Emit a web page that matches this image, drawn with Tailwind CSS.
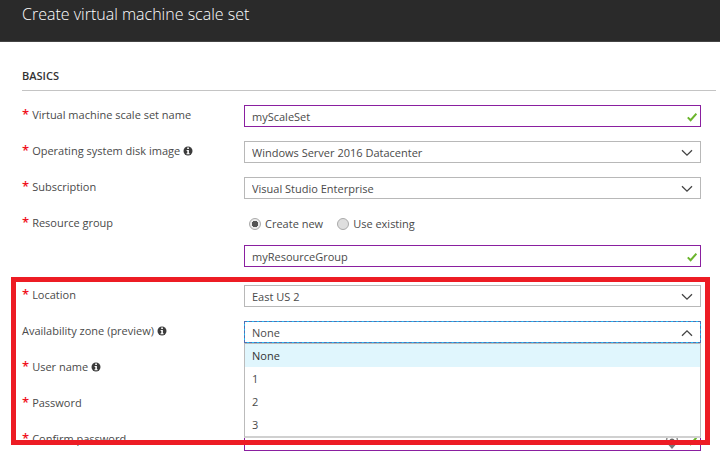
<!DOCTYPE html>
<html lang="en">
<head>
<meta charset="utf-8">
<meta name="viewport" content="width=device-width, initial-scale=1">
<title>Create virtual machine scale set</title>
<script src="https://cdn.jsdelivr.net/npm/@tailwindcss/browser@4"></script>
</head>
<body class="bg-white font-['Open_Sans','Noto_Sans',sans-serif] text-[11px] text-[#4a4a4a]">
<svg class="hidden" aria-hidden="true">
  <symbol id="check" viewBox="0 0 10 10"><path d="M0.8 5.4 3.6 8.2 9.400 1.6" fill="none" stroke="#6bb52c" stroke-width="2"/></symbol>
  <symbol id="chevron" viewBox="0 0 12 8"><path d="M1 1.2 6 6.2 11 1.2" fill="none" stroke="#444" stroke-width="1.3"/></symbol>
  <symbol id="info" viewBox="0 0 10 10"><circle cx="5" cy="5" r="4.500" fill="#3b3b3b"/><path d="M4.2 1.6h1.7v1.5H4.2zM3.6 4h2.3v3.2h.7v1H3.5v-1h.8V5h-.7z" fill="#fff"/></symbol>
  <symbol id="reveal" viewBox="0 0 14 12"><path d="M2.2 0.500Q.6 4 3 7M11.800 0.500Q13.400 4 11 7" fill="none" stroke="#888" stroke-width="1.4"/><circle cx="7" cy="4" r="2.6" fill="#666"/><path d="M3.500 8h7L7 12z" fill="#777"/></symbol>
</svg>

<header class="flex h-[42px] items-start border-b border-[#444] bg-[#2a2a2a] px-[22px] pt-0.5">
  <h1 class="text-base leading-6 font-light text-white">Create virtual machine scale set</h1>
</header>

<main>
  <form>
    <h2 class="mr-1 ml-[22px] border-b border-[#c4c4c4] pt-[26px] pb-1.5 text-[11px] leading-4 font-semibold text-[#333]">BASICS</h2>

    <div class="flex flex-col gap-3.5 pt-3.5 pr-[19px] pl-[22px]">
      <div class="flex">
        <label for="name" class="w-[222px] shrink-0 leading-5"><span class="mr-[3px] text-[13px] leading-4 font-semibold text-[#f0101c]">*</span>Virtual machine scale set name</label>
        <div class="relative h-[22px] flex-1">
          <input id="name" type="text" value="myScaleSet" class="block size-full border border-[#8a1fa0] px-[7px]">
          <svg class="absolute top-[7px] right-1 size-2.5"><use href="#check"/></svg>
        </div>
      </div>
      <div class="flex">
        <label for="image" class="w-[222px] shrink-0 leading-5"><span class="mr-[3px] text-[13px] leading-4 font-semibold text-[#f0101c]">*</span>Operating system disk image <svg class="inline size-2.5 align-[-1px]"><use href="#info"/></svg></label>
        <div class="relative h-[22px] flex-1">
          <select id="image" class="block size-full appearance-none border border-[#b8b8b8] px-[7px] pt-0.5"><option>Windows Server 2016 Datacenter</option></select>
          <svg class="pointer-events-none absolute top-2 right-2 h-2 w-3"><use href="#chevron"/></svg>
        </div>
      </div>
      <div class="flex">
        <label for="subscription" class="w-[222px] shrink-0 leading-5"><span class="mr-[3px] text-[13px] leading-4 font-semibold text-[#f0101c]">*</span>Subscription</label>
        <div class="relative h-[22px] flex-1">
          <select id="subscription" class="block size-full appearance-none border border-[#b8b8b8] px-[7px] pt-0.5"><option>Visual Studio Enterprise</option></select>
          <svg class="pointer-events-none absolute top-2 right-2 h-2 w-3"><use href="#chevron"/></svg>
        </div>
      </div>
      <div class="flex">
        <label for="group" class="w-[222px] shrink-0 leading-5"><span class="mr-[3px] text-[13px] leading-4 font-semibold text-[#f0101c]">*</span>Resource group</label>
        <div class="flex-1">
          <div class="flex h-8 items-start gap-3.5 pl-[5px] leading-[22px]">
            <label class="flex items-center gap-1"><input type="radio" name="mode" checked class="size-3 appearance-none rounded-full border border-[#aaa] bg-[#ececec] checked:bg-[radial-gradient(circle,#555_0,#555_3px,#ececec_3px)]">Create new</label>
            <label class="flex items-center gap-1"><input type="radio" name="mode" class="size-3 appearance-none rounded-full border border-[#aaa] bg-[#dedede] checked:bg-[radial-gradient(circle,#555_0,#555_3px,#ececec_3px)]">Use existing</label>
          </div>
          <div class="relative h-[22px]">
            <input id="group" type="text" aria-label="Resource group name" value="myResourceGroup" class="block size-full border border-[#8a1fa0] px-[7px]">
            <svg class="absolute top-[7px] right-1 size-2.5"><use href="#check"/></svg>
          </div>
        </div>
      </div>
    </div>

    <div class="relative mt-[18px] flex flex-col gap-3.5 pr-[19px] pl-[22px]">
      <div class="flex">
        <label for="location" class="w-[222px] shrink-0 leading-5"><span class="mr-[3px] text-[13px] leading-4 font-semibold text-[#f0101c]">*</span>Location</label>
        <div class="relative h-[22px] flex-1">
          <select id="location" class="block size-full appearance-none border border-[#b8b8b8] px-[7px] pt-0.5"><option>East US 2</option></select>
          <svg class="pointer-events-none absolute top-2 right-2 h-2 w-3"><use href="#chevron"/></svg>
        </div>
      </div>
      <div class="flex">
        <label for="zone" class="w-[222px] shrink-0 leading-5">Availability zone (preview) <svg class="inline size-2.5 align-[-1px]"><use href="#info"/></svg></label>
        <div class="relative h-[22px] flex-1">
          <button id="zone" type="button" role="combobox" aria-expanded="true" aria-controls="zones" class="block size-full border border-dashed border-[#4f6fb5] bg-[#22c0f5]"><span class="flex size-full items-center justify-between bg-white px-[7px] pt-0.5">None<svg class="h-2 w-3 rotate-180"><use href="#chevron"/></svg></span></button>
          <ul id="zones" role="listbox" aria-label="Availability zone" class="absolute inset-x-0 top-full z-10 border border-b-2 border-[#bbb] border-b-[#d0d0d0] bg-white leading-[23px] *:px-[7px]">
            <li role="option" aria-selected="true" class="bg-[#e0f6fd] text-[#333]">None</li>
            <li role="option">1</li>
            <li role="option">2</li>
            <li role="option">3</li>
          </ul>
        </div>
      </div>
      <div class="flex">
        <label for="user" class="w-[222px] shrink-0 leading-5"><span class="mr-[3px] text-[13px] leading-4 font-semibold text-[#f0101c]">*</span>User name <svg class="inline size-2.5 align-[-1px]"><use href="#info"/></svg></label>
        <div class="h-[22px] flex-1"><input id="user" type="text" class="block size-full border border-[#8a1fa0] px-[7px]"></div>
      </div>
      <div class="flex">
        <label for="password" class="w-[222px] shrink-0 leading-5"><span class="mr-[3px] text-[13px] leading-4 font-semibold text-[#f0101c]">*</span>Password</label>
        <div class="h-[22px] flex-1"><input id="password" type="password" class="block size-full border border-[#8a1fa0] px-[7px]"></div>
      </div>
      <div class="flex">
        <label for="confirm" class="w-[222px] shrink-0 leading-5"><span class="mr-[3px] text-[13px] leading-4 font-semibold text-[#f0101c]">*</span>Confirm password</label>
        <div class="relative h-[22px] flex-1">
          <input id="confirm" type="password" class="block size-full border border-[#8a1fa0] px-[7px]">
          <svg class="absolute top-2 right-[22px] h-3 w-3.5"><use href="#reveal"/></svg>
          <svg class="absolute top-[7px] right-1 size-2.5"><use href="#check"/></svg>
        </div>
      </div>
      <div class="pointer-events-none absolute -top-2 right-2.5 bottom-1.5 left-[11px] z-20 border-5 border-[#ed1c24]"></div>
    </div>
  </form>
</main>
</body>
</html>
